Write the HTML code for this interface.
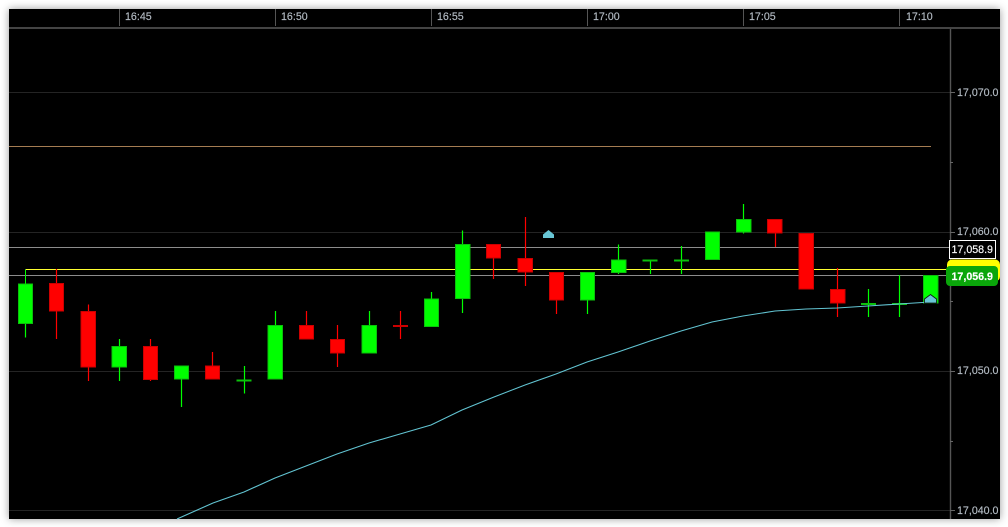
<!DOCTYPE html>
<html>
<head>
<meta charset="utf-8">
<style>
html,body{margin:0;padding:0;background:#fff;width:1008px;height:527px;overflow:hidden}
#c{position:absolute;left:9px;top:9px;width:991px;height:510px;background:#000;box-shadow:0 0 8px rgba(0,0,0,.4)}
svg{position:absolute;left:0;top:0}
text{font-family:"Liberation Sans",sans-serif;font-size:10.67px;fill:#b4bcc4;stroke:#b4bcc4;stroke-width:.15}
.g rect{fill:#0f0;stroke:#0cc00c;stroke-width:1}
.g path{stroke:#0f0;stroke-width:1.2;fill:none}
.r rect{fill:#f00;stroke:#cc0000;stroke-width:1}
.r path{stroke:#f00;stroke-width:1.2;fill:none}
</style>
</head>
<body>
<div id="c"></div>
<svg width="1008" height="527" viewBox="0 0 1008 527">
<!-- header -->
<g stroke="#555" stroke-width="1">
<path d="M119.5 9V26M275.5 9V26M431.5 9V26M587.5 9V26M743.5 9V26M899.5 9V26"/>
</g>
<rect x="9" y="27" width="991" height="2" fill="#444"/>
<text x="125" y="20">16:45</text>
<text x="281" y="20">16:50</text>
<text x="437" y="20">16:55</text>
<text x="593" y="20">17:00</text>
<text x="749" y="20">17:05</text>
<text x="906" y="20">17:10</text>
<!-- grid -->
<g stroke="#242424" stroke-width="1">
<path d="M9 92.5H950M9 232.5H950M9 371.5H950M9 510.5H950"/>
</g>
<path d="M9 146.5H931" stroke="#a57c52" stroke-width="1"/>
<path d="M9 247.5H950M9 275.5H950" stroke="#8c8c8c" stroke-width="1"/>
<path d="M25.5 269.5H948" stroke="#ffff30" stroke-width="1"/>
<path d="M25.5 269.5V284" stroke="#0f0" stroke-width="1"/>
<!-- axis -->
<path d="M950.5 29V519" stroke="#555" stroke-width="1.4"/>
<g stroke="#666" stroke-width="1">
<path d="M950 92.5H955M950 162.5H953M950 232.5H955M950 301.5H953M950 371.5H955M950 441.5H953M950 510.5H955"/>
</g>
<text x="957" y="96">17,070.0</text>
<text x="957" y="235">17,060.0</text>
<text x="957" y="374">17,050.0</text>
<text x="957" y="514">17,040.0</text>
<!-- green candles -->
<g class="g">
<path d="M25.5 284V337.5"/><rect x="18.5" y="284" width="14" height="39.5"/>
<path d="M119.5 339V381"/><rect x="112" y="346.5" width="14.5" height="20.5"/>
<path d="M181.5 366V407"/><rect x="174.5" y="366" width="14" height="13"/>
<path d="M244.5 366V393.5"/><rect x="237" y="380" width="14" height="1"/>
<path d="M275.5 311V379"/><rect x="268" y="325.5" width="14.5" height="53.5"/>
<path d="M369.5 311V353"/><rect x="362" y="325.5" width="14.5" height="27.5"/>
<path d="M431.5 292V327"/><rect x="424.5" y="299" width="14" height="27.5"/>
<path d="M462.5 230.5V313"/><rect x="455.5" y="244.5" width="14.5" height="54"/>
<path d="M587.5 272V314"/><rect x="580.5" y="272.5" width="14" height="27.5"/>
<path d="M618.5 244.5V274"/><rect x="611.5" y="260" width="14.5" height="12.5"/>
<path d="M650.5 260V274"/><rect x="643" y="260" width="14" height="1"/>
<path d="M681.5 246V274"/><rect x="674.5" y="260" width="14" height="1"/>
<rect x="705.5" y="232" width="14" height="27.5"/>
<path d="M743.5 204V233.5"/><rect x="736.5" y="219.5" width="14.5" height="12.5"/>
<path d="M868.5 289V317"/><rect x="861.5" y="303.5" width="14" height="1"/>
<path d="M899.5 275V317"/><rect x="892.5" y="303.5" width="14" height="1"/>
<rect x="923.5" y="275.5" width="14.5" height="27.5"/>
</g>
<!-- red candles -->
<g class="r">
<path d="M56.5 269V339"/><rect x="49.5" y="283.5" width="14" height="27.5"/>
<path d="M88.5 304.5V381"/><rect x="81" y="311.5" width="14.5" height="55.5"/>
<path d="M150.5 339V381"/><rect x="143.5" y="346.5" width="14" height="33"/>
<path d="M212.5 352V379"/><rect x="205.5" y="366" width="14" height="13"/>
<path d="M306.5 311V339"/><rect x="299.5" y="325.5" width="14" height="13.5"/>
<path d="M337.5 325V367"/><rect x="330.5" y="339.5" width="14" height="13.5"/>
<path d="M400.5 311V339"/><rect x="393.5" y="325.5" width="14" height="1"/>
<path d="M493.5 258V279"/><rect x="486.5" y="244.5" width="14" height="13.5"/>
<path d="M525.5 217V286"/><rect x="518" y="258.5" width="14.5" height="13.5"/>
<path d="M556.5 272V314"/><rect x="549.5" y="272.5" width="14" height="27.5"/>
<path d="M775.5 219V247"/><rect x="767.5" y="219.5" width="14.5" height="13.5"/>
<rect x="799" y="233.5" width="14.5" height="55.5"/>
<path d="M837.5 268V317"/><rect x="830.5" y="289.5" width="14.5" height="13.5"/>
</g>
<!-- moving average -->
<path d="M177 519L213 503L244 492L275 478L306 466L337 454L369 443L400 434L431 425L462 410L494 397L525 385L556 374L587 362L618 352L650 341L681 331L712 322L743 316L775 311L806 309L837 308L868 306L899 304L930 302" fill="none" stroke="#62c4d2" stroke-width="1.1"/>
<!-- markers -->
<path d="M543 238V234.5L548.5 230L554 234.5V238Z" fill="#68c6d6"/>
<path d="M924.5 303V299L930.5 294.5L936.5 299V303Z" fill="#68c6d6" stroke="#111" stroke-width="0.8"/>
<!-- price boxes -->
<rect x="949.5" y="240.5" width="46" height="18" fill="#000" stroke="#fff" stroke-width="1"/>
<text x="951.5" y="253" style="fill:#fff;stroke:#fff">17,058.9</text>
<rect x="947" y="259.5" width="53" height="22" rx="5" fill="#ffff00"/>
<rect x="946" y="266" width="52" height="20" rx="4" fill="#0aa60a"/>
<text x="951.5" y="280" style="fill:#fff;stroke:#fff;font-weight:bold">17,056.9</text>
</svg>
</body>
</html>
